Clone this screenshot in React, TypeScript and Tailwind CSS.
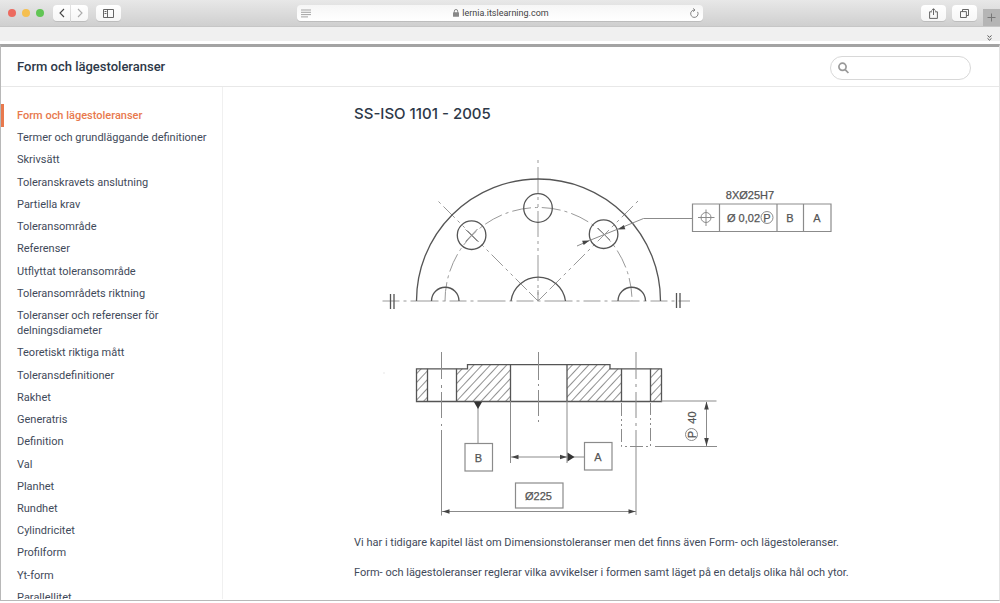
const sections = [
  "Form och lägestoleranser",
  "Termer och grundläggande definitioner",
  "Skrivsätt",
  "Toleranskravets anslutning",
  "Partiella krav",
  "Toleransområde",
  "Referenser",
  "Utflyttat toleransområde",
  "Toleransområdets riktning",
  "Toleranser och referenser för delningsdiameter",
  "Teoretiskt riktiga mått",
  "Toleransdefinitioner",
  "Rakhet",
  "Generatris",
  "Definition",
  "Val",
  "Planhet",
  "Rundhet",
  "Cylindricitet",
  "Profilform",
  "Yt-form",
  "Parallellitet",
];

const toolButton =
  "flex h-4 items-center justify-center bg-gradient-to-b from-white to-[#f6f6f6] text-[#666] shadow-[0_1px_0_#bdbdbd]";

function BrowserBar() {
  return (
    <div className="flex h-[27px] shrink-0 items-center border-b border-[#c6c6c6] bg-gradient-to-b from-[#e8e8e8] to-[#cfcfcf] pl-2">
      <div className="flex gap-[6px]">
        <span className="size-2 rounded-full bg-[#ec6a5f]" />
        <span className="size-2 rounded-full bg-[#f5bf4f]" />
        <span className="size-2 rounded-full bg-[#61c554]" />
      </div>
      <div className="ml-[9px] flex gap-px">
        <button aria-label="Bakåt" className={`${toolButton} w-[17px] rounded-l-sm`}>
          <svg width="6" height="10" viewBox="0 0 6 10" fill="none" stroke="#444" strokeWidth="1.1">
            <path d="M5 1 1 5l4 4" />
          </svg>
        </button>
        <button aria-label="Framåt" className={`${toolButton} w-[17px] rounded-r-sm`}>
          <svg width="6" height="10" viewBox="0 0 6 10" fill="none" stroke="#aaa" strokeWidth="1.1">
            <path d="m1 1 4 4-4 4" />
          </svg>
        </button>
      </div>
      <button aria-label="Visa sidofält" className={`${toolButton} ml-2 w-[25px] rounded-sm`}>
        <svg width="11" height="9" viewBox="0 0 11 9" fill="none" stroke="#555">
          <path d="M.5.5h10v8H.5zM4.5.5v8M1.5 2.5h2M1.5 4.5h2" strokeWidth=".9" />
        </svg>
      </button>
      <div className="flex flex-1 justify-center px-9">
        <div className="mr-[42px] flex h-4 w-[406px] items-center rounded-sm bg-gradient-to-b from-[#f6f6f6] to-white px-1 shadow-[0_1px_0_#bdbdbd]">
          <svg width="11" height="9" viewBox="0 0 11 9" stroke="#999" strokeWidth=".9">
            <path d="M0 1h10M0 3.3h10M0 5.6h10M0 7.9h7" />
          </svg>
          <div className="flex flex-1 items-center justify-center gap-[3px]">
            <svg width="6" height="8" viewBox="0 0 6 8">
              <path d="M1.3 4V2.2a1.7 1.7 0 0 1 3.4 0V4" fill="none" stroke="#888" />
              <rect y="3.3" width="6" height="4.5" rx=".6" fill="#888" />
            </svg>
            <span className="text-[9px] leading-4 text-[#444]">lernia.itslearning.com</span>
          </div>
          <button aria-label="Ladda om">
            <svg width="9" height="10" viewBox="0 0 9 10" fill="none" stroke="#777" strokeWidth=".9">
              <path d="M7.6 3.9A3.7 3.7 0 1 1 4.5 2M3.2.4 5 2 3.2 3.7" />
            </svg>
          </button>
        </div>
      </div>
      <div className="flex w-[79px] shrink-0 items-center justify-between">
        <button aria-label="Dela" className={`${toolButton} w-[25px] rounded-sm`}>
          <svg width="9" height="11" viewBox="0 0 9 11" fill="none" stroke="#555" strokeWidth=".9">
            <path d="M3 3.8H.6v6.6h7.8V3.8H6M4.5 7V.8M2.6 2.6 4.5.7l1.9 1.9" />
          </svg>
        </button>
        <button aria-label="Visa flikar" className={`${toolButton} w-[25px] rounded-sm`}>
          <svg width="9" height="9" viewBox="0 0 9 9" fill="none" stroke="#555" strokeWidth=".9">
            <path d="M.5 2.6h5.9v5.9H.5zM2.5 2.6V.5h6v6H6.4" />
          </svg>
        </button>
        <button
          aria-label="Ny flik"
          className="mt-2 flex h-[17px] w-[17px] items-center justify-center self-end bg-[#b5b5b5]"
        >
          <svg width="9" height="9" viewBox="0 0 9 9" stroke="#777">
            <path d="M4.5.5v8M.5 4.5h8" />
          </svg>
        </button>
      </div>
    </div>
  );
}

function Arrow({ x, y, angle, size = 7 }: { x: number; y: number; angle: number; size?: number }) {
  return (
    <path
      d={`M0 0L${-size} -2.3V2.3Z`}
      transform={`translate(${x} ${y}) rotate(${angle})`}
      fill="#444"
      stroke="none"
    />
  );
}

function FlangeDrawing() {
  return (
    <svg
      viewBox="354 140 500 385"
      className="block w-full max-w-[500px]"
      role="img"
      aria-label="Fläns med lägestolerans"
      fill="none"
      stroke="#8b8b8b"
      strokeWidth="1"
    >
      <defs>
        <pattern id="hatch" width="6" height="6" patternUnits="userSpaceOnUse" patternTransform="rotate(43)">
          <path d="M1.5 0V6" stroke="#858585" strokeWidth=".9" />
        </pattern>
      </defs>

      <g stroke="#999" strokeDasharray="19 4 3 4">
        <path d="M538 160V301" strokeDasharray="3 4 26 4 3 4" />
        <path d="M382.5 301H690" strokeDasharray="17 4 3 4 28 4 3 4" />
        <path d="M438.5 201.5 538 301" strokeDasharray="3 4 16 4 3 4" />
        <path d="M638 201 538 301" strokeDasharray="3 4 16 4 3 4" />
        <path d="M445 301A93.5 93.5 0 0 1 632 301" />
        <path d="M529 292l9 9 9-9M538 290v11" strokeDasharray="none" />
      </g>
      <path d="M465.5 241.5 477.5 229M465.5 229.5l12 12M598 228l12 12" />
      <g stroke="#555" strokeWidth="1.3">
        <path d="M416.5 301A122 122 0 0 1 660.5 301" />
        <path d="M511 301A27.5 27.5 0 0 1 565.5 301" />
        <path d="M431.5 301A13.7 13.7 0 0 1 459 301M618 301A13.7 13.7 0 0 1 645.5 301" />
        <circle cx="538" cy="208" r="14.3" />
        <circle cx="471.6" cy="235.2" r="14.3" />
        <circle cx="603.6" cy="234.2" r="14.3" />
        <path d="M390.5 294V309M394 294V309M676.5 293V308M680 293V308" />
      </g>
      <path d="M577 246 589.5 240.5 618 229 643.5 218.5H692" />
      <Arrow x={589.5} y={240.5} angle={-20} />
      <Arrow x={618} y={229.5} angle={160} />

      <path d="M692.5 204H831V231.5H692.5ZM719.5 204V231.5M777 204V231.5M803.5 204V231.5" strokeWidth="1.2" />
      <circle cx="706" cy="217.5" r="5" />
      <path d="M698 217.5H714.5M706 209.5V226" />
      <circle cx="767" cy="217.5" r="6" />

      <path
        d="M416.5 368.8H427.5V401.5H416.5ZM456.5 368.8H467.5V364.7H510.5V401.5H456.5ZM567 364.7H610V368.8H621.5V401.5H567ZM650.5 368.8H661V401.5H650.5Z"
        fill="url(#hatch)"
        stroke="none"
      />
      <g stroke="#555" strokeWidth="1.3">
        <path d="M416.5 368.8H467.5V364.7H610V368.8H661.5V401.5H416.5Z" />
        <path d="M427.5 368.8V401.5M456.5 368.8V401.5M510.5 364.7V401.5M567 364.7V401.5M621.5 368.8V401.5M650.5 368.8V401.5" />
      </g>
      <path d="M441.5 352V379M441.5 385V388M441.5 392V418M441.5 424V426M441.5 430V515.5" />
      <path d="M538.5 352V380M538.5 384V386M538.5 390V416M538.5 420V422" />
      <path d="M636 352V379M636 384V387M636 392V418M636 423V426M636 430V515" />
      <path d="M510.5 401V463M567 401V463M478 404V443M511 457H567M573 457H584.5" />
      <path d="M621.5 403V446.5H650.5V403" strokeDasharray="13 3 2 3 2 3" />
      <path d="M661 401H716.5M655 446.5H717M706.5 402V446" />
      <path d="M442 511.5H636" />
      <path d="M474 402H482L478 409Z" fill="#333" stroke="none" />
      <path d="M567.5 452.5V461.5L574.5 457Z" fill="#333" stroke="none" />
      <Arrow x={511.5} y={457} angle={180} />
      <Arrow x={567} y={457} angle={0} />
      <Arrow x={442.5} y={511.5} angle={180} />
      <Arrow x={635.5} y={511.5} angle={0} />
      <Arrow x={706.5} y={401.5} angle={-90} size={8} />
      <Arrow x={706.5} y={446} angle={90} size={8} />
      <g strokeWidth="1.2">
        <rect x="465" y="443.5" width="27.5" height="27.5" />
        <rect x="584.5" y="442.5" width="27.5" height="27.5" />
        <rect x="515.5" y="483" width="47.5" height="25" />
      </g>
      <circle cx="691.5" cy="434.5" r="6" />
      <circle cx="384" cy="373" r=".7" fill="#ddd" stroke="none" />

      <g fill="#555" stroke="#555" strokeWidth=".25" fontFamily="Liberation Sans, Arial, sans-serif" fontSize="11" textAnchor="middle">
        <text x="750" y="199">8XØ25H7</text>
        <text x="743.5" y="221.5">Ø 0,02</text>
        <text x="767" y="221.5">P</text>
        <text x="790" y="221.5">B</text>
        <text x="817" y="221.5">A</text>
        <text x="478.5" y="461.5">B</text>
        <text x="598" y="461">A</text>
        <text x="538.5" y="500">Ø225</text>
        <text transform="translate(695.5 417.5) rotate(-90)">40</text>
        <text transform="translate(695.5 434.5) rotate(-90)">P</text>
      </g>
    </svg>
  );
}

export default function App() {
  return (
    <div className="flex h-screen flex-col overflow-hidden bg-white font-['Roboto','Liberation_Sans',sans-serif] text-[#3f4a5a]">
      <BrowserBar />
      <div className="flex h-[14px] shrink-0 items-end justify-end bg-[#f0f0f0] pr-2">
        <svg width="5" height="6" viewBox="0 0 5 6" fill="none" stroke="#555">
          <path d="m.5.5 2 1.8 2-1.8M.5 3.3l2 1.8 2-1.8" />
        </svg>
      </div>
      <div className="mt-[3px] mb-[2px] flex min-h-0 flex-1 flex-col border border-t-[3px] border-[#b8b8b8] border-t-[#a3a3a3] border-r-[#e4e4e4] pb-px">
        <header className="flex h-10 shrink-0 items-center justify-between border-b border-[#e8e8e8] pr-7 pl-4">
          <h1 className="text-[13px] leading-5 font-medium text-[#2d3848]">Form och lägestoleranser</h1>
          <label className="mt-[2px] flex h-6 w-[141px] items-center rounded-full border border-[#d8d8d8] px-[7px]">
            <svg width="11" height="12" viewBox="0 0 11 12" fill="none" stroke="#999" strokeWidth="1.7">
              <circle cx="4.5" cy="4.8" r="3.6" />
              <path d="m7.2 7.7 3.2 3.3" />
            </svg>
            <input type="search" aria-label="Sök" className="ml-1 min-w-0 flex-1 bg-transparent text-[11px] outline-none" />
          </label>
        </header>
        <div className="flex min-h-0 flex-1">
          <nav className="w-[222px] shrink-0 overflow-hidden border-r border-[#f0f0f0] pt-[21px]">
            <ul className="flex min-h-[497px] flex-col justify-between text-[11px] leading-[15px]">
              {sections.map((name, i) => (
                <li key={name} className="relative pr-2 pl-4 first:font-medium first:text-[#e8794d]">
                  {i === 0 && <span className="absolute -top-1 left-0 h-[23px] w-[3px] bg-[#e8794d]" />}
                  <a href="#top" aria-current={i === 0 ? "page" : undefined} className="block">
                    {name}
                  </a>
                </li>
              ))}
            </ul>
          </nav>
          <main id="top" className="min-w-0 flex-1 overflow-hidden pt-[17px] pl-[131px]">
            <h2 className="font-['Inter','Liberation_Sans',sans-serif] text-[15px] leading-5 font-medium text-[#2d3848]">
              SS-ISO 1101 - 2005
            </h2>
            <div className="mt-4">
              <FlangeDrawing />
            </div>
            <div className="mt-[10px] space-y-[15px] text-[11px] leading-[15px]">
              <p>Vi har i tidigare kapitel läst om Dimensionstoleranser men det finns även Form- och lägestoleranser.</p>
              <p>Form- och lägestoleranser reglerar vilka avvikelser i formen samt läget på en detaljs olika hål och ytor.</p>
            </div>
          </main>
        </div>
      </div>
    </div>
  );
}
